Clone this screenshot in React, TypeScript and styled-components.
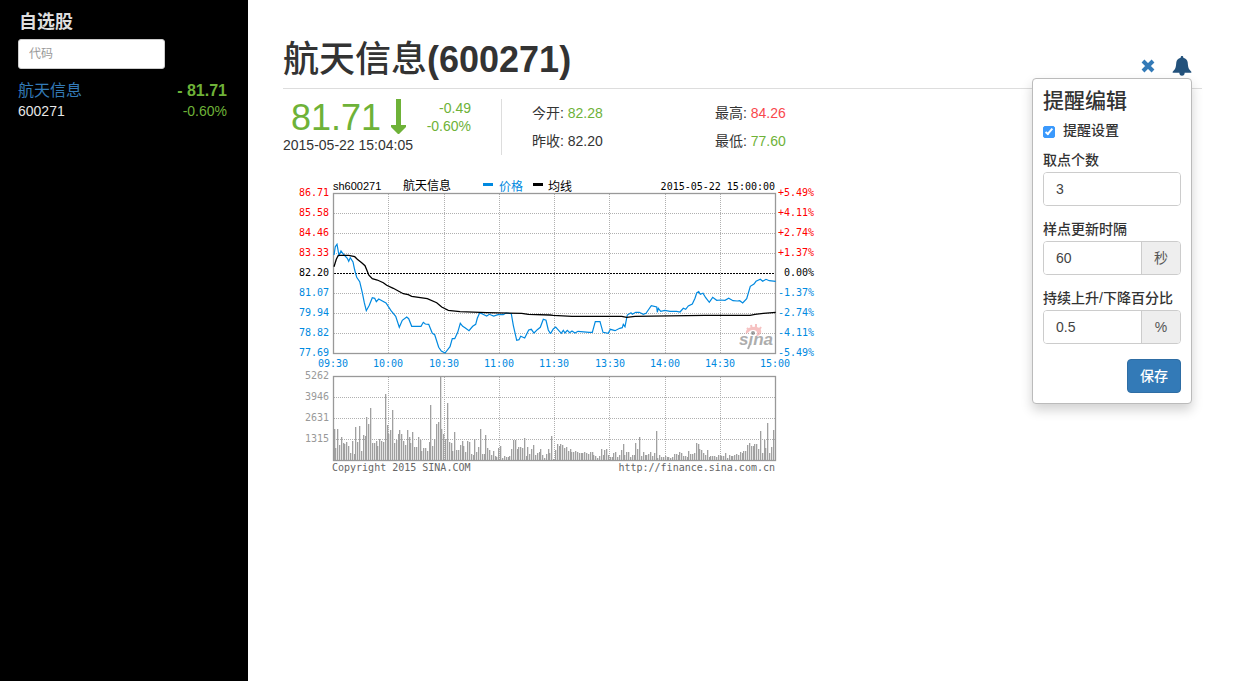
import React from 'react';
import styled, { createGlobalStyle } from 'styled-components';

const GREEN = '#6eb238';
const RED = '#f9484c';

const GlobalStyle = createGlobalStyle`
  *, *::before, *::after { box-sizing: border-box; }
  body {
    margin: 0;
    background: #fff;
    color: #333;
    font: 14px/20px "Liberation Sans", "Noto Sans CJK SC", sans-serif;
  }
  button, input { font: inherit; color: inherit; }
`;

const Page = styled.div`
  display: flex;
  min-height: 100vh;
`;

const Sidebar = styled.aside`
  flex: 0 0 248px;
  padding: 12px 20px 20px 18px;
  background: #000;
  color: #e6e6e6;
`;

const SidebarTitle = styled.h2`
  margin: 0 0 7px;
  padding-left: 1px;
  color: #ddd;
  font-size: 18px;
  line-height: 20px;
  font-weight: 700;
`;

const SearchInput = styled.input`
  display: block;
  width: 147px;
  height: 30px;
  padding: 5px 10px;
  border: 1px solid #ccc;
  border-radius: 3px;
  background: #fff;
  color: #555;
  font-size: 12px;
  line-height: 18px;
  &::placeholder { color: #999; opacity: 1; }
`;

const StockList = styled.ul`
  margin: 11px 0 0;
  padding: 0;
  list-style: none;
`;

const StockRow = styled.li`
  display: grid;
  grid-template-columns: 1fr auto;
  grid-template-rows: 22px 18px;
  padding-right: 1px;
  line-height: 18px;
`;

const StockLink = styled.a`
  color: #337ab7;
  font-size: 16px;
  line-height: 22px;
  text-decoration: none;
`;

const StockPrice = styled.strong`
  color: ${GREEN};
  font-size: 16px;
  line-height: 22px;
`;

const Figure = styled.span<{ $color?: string }>`
  color: ${(p) => p.$color || 'inherit'};
`;

const StockChange = styled(Figure)`
  text-align: right;
`;

const Main = styled.main`
  flex: 1;
  min-width: 0;
  padding: 40px 34px 40px 35px;
`;

const Header = styled.header`
  display: flex;
  justify-content: space-between;
  padding-bottom: 8px;
  border-bottom: 1px solid #ddd;
`;

const Title = styled.h1`
  margin: 0;
  font-size: 36px;
  line-height: 40px;
  font-weight: 500;
`;

const TitleCode = styled.span`
  font-weight: 700;
`;

const Actions = styled.div`
  position: relative;
  display: flex;
  align-items: center;
  gap: 14px;
  height: 20px;
  margin: 16px 10px 0 0;
`;

const IconButton = styled.button<{ $color: string }>`
  display: flex;
  justify-content: center;
  width: 20px;
  padding: 0;
  border: 0;
  background: none;
  color: ${(p) => p.$color};
  cursor: pointer;
`;

const Panel = styled.form`
  position: absolute;
  top: 22px;
  right: 0;
  z-index: 10;
  width: 160px;
  padding: 10px;
  border: 1px solid #bbb;
  border-radius: 4px;
  background: #fff;
  box-shadow: 0 6px 12px rgba(0, 0, 0, 0.18);
`;

const PanelTitle = styled.h3`
  margin: 0 0 7px;
  font-size: 21px;
  line-height: 24px;
  font-weight: 500;
`;

const CheckLabel = styled.label`
  display: flex;
  align-items: center;
  gap: 8px;
  margin-bottom: 12px;
  font-weight: 500;
  line-height: 20px;
`;

const Checkbox = styled.input`
  appearance: none;
  display: flex;
  justify-content: center;
  width: 12px;
  height: 12px;
  margin: 3px 0 0;
  border: 1px solid #3b99fc;
  border-radius: 2px;
  background: #fff;
  &:checked { background: #3b99fc; }
  &:checked::after {
    content: '';
    width: 4px;
    height: 8px;
    border: solid #fff;
    border-width: 0 2px 2px 0;
    transform: rotate(40deg);
  }
`;

const Field = styled.div`
  margin-bottom: 15px;
`;

const FieldLabel = styled.label`
  display: block;
  height: 20px;
  font-weight: 500;
  line-height: 16px;
  white-space: nowrap;
`;

const InputGroup = styled.div`
  display: flex;
  height: 34px;
  border: 1px solid #ccc;
  border-radius: 4px;
  overflow: hidden;
`;

const GroupInput = styled.input`
  flex: 1;
  min-width: 0;
  padding: 6px 12px;
  border: 0;
  background: #fff;
  color: #444;
`;

const Addon = styled.span`
  flex: 0 0 39px;
  border-left: 1px solid #ccc;
  background: #eee;
  color: #555;
  line-height: 32px;
  text-align: center;
`;

const PanelFooter = styled.div`
  display: flex;
  justify-content: flex-end;
`;

const SaveButton = styled.button`
  width: 54px;
  height: 34px;
  padding: 0;
  border: 1px solid #2e6da4;
  border-radius: 4px;
  background: #337ab7;
  color: #fff;
  font-weight: 500;
`;

const Quote = styled.section`
  display: flex;
  margin-top: 10px;
`;

const QuoteSummary = styled.div`
  flex: 0 0 219px;
  height: 56px;
  border-right: 1px solid #ddd;
`;

const PriceRow = styled.div`
  display: flex;
  align-items: flex-start;
  height: 36px;
  padding: 0 30px 0 8px;
  color: ${GREEN};
`;

const Price = styled.div`
  flex: 0 0 98px;
  font-size: 36px;
  line-height: 38px;
`;

const Change = styled.div`
  flex: 1;
  line-height: 18px;
  text-align: right;
`;

const QuoteDetails = styled.div`
  display: grid;
  grid-template-columns: 183px 183px;
  padding-left: 30px;
  line-height: 28px;
`;

const ChartImage = styled.svg`
  display: block;
  margin-top: 20px;
  font-family: "DejaVu Sans Mono", monospace;
  font-size: 10px;
`;

const VERTICALS = [388, 444, 499, 554, 609, 665, 720];
const TIMES: [number, string][] = [
  [333, '09:30'], [388, '10:00'], [444, '10:30'], [499, '11:00'], [554, '11:30'],
  [610, '13:30'], [665, '14:00'], [720, '14:30'], [775, '15:00'],
];
const LEVELS: [string, string, string][] = [
  ['86.71', '+5.49%', '#f00'], ['85.58', '+4.11%', '#f00'], ['84.46', '+2.74%', '#f00'],
  ['83.33', '+1.37%', '#f00'], ['82.20', '0.00%', '#000'], ['81.07', '-1.37%', '#0089e0'],
  ['79.94', '-2.74%', '#0089e0'], ['78.82', '-4.11%', '#0089e0'], ['77.69', '-5.49%', '#0089e0'],
];
const VOLUMES = ['5262', '3946', '2631', '1315'];

/* Samples are stored in thirds of a pixel, relative to the origin of their session. */
const samples = (text: string, originX: number, originY: number) =>
  text.trim().split(/\s+/).map((pair) => {
    const [x, y] = pair.split(',').map(Number);
    return [originX + x / 3, originY + y / 3];
  });

const PRICE = [
  ...samples('132,255 136,230 141,223 147,256 153,243 160,252 172,265 176,274 181,263 189,276 194,300', 290, 170),
  ...samples(`200,22 209,35 217,68 223,98 229,122 238,106 247,83 254,85 259,95 266,87 288,99 303,122 317,139 328,172
    337,151 350,141 356,146 365,169 393,169 400,157 406,162 416,163 427,190 434,194 446,232 454,243 465,249 480,230
    487,206 494,206 503,187 511,160 518,169 525,173 537,182 548,169 557,163 562,145 569,128 590,138 598,133 611,138
    624,134 640,134 648,129 664,131 670,166 680,211 687,209 692,199 704,204 716,180 724,178 732,189 742,179 751,172
    760,148 768,151 775,180 781,190`, 290, 270),
  ...samples(`2,190 10,177 17,171 34,190 40,181 45,189 52,181 59,188 66,183 75,189 84,184 118,187 127,187 136,155
    150,155 159,187 175,190 181,178 195,182 209,175 217,173 220,163 225,170 232,135 243,128 247,133 257,127 268,127
    280,133 288,130 304,107 320,111 322,127 325,115 332,124 345,121 360,124 380,124 390,126 400,115 407,118 415,108
    427,102 435,85 440,69 446,65 451,73 459,70 467,83 478,97 488,82 500,91 512,90 525,91 536,85 549,92 562,93 569,92
    578,99 590,86 601,49 612,42 618,34 631,28 638,34 648,28 658,32 677,34`, 550, 270),
];
const AVERAGE = [
  ...samples('132,290 139,268 145,256 176,256 194,260 202,268 216,279 225,287 233,307', 290, 170),
  ...samples(`236,15 247,26 262,30 280,38 290,46 310,55 325,63 340,71 355,74 365,79 412,86 440,98 455,111 475,121
    510,125 590,128 695,130 715,133 780,135`, 290, 270),
  ...samples('10,136 66,139 215,139 230,142 255,139 465,136 600,136 615,133 640,130 677,127', 550, 270),
];
const BARS = [
  ...samples(`134,192 137,249 142,192 148,240 154,216 160,234 163,237 169,231 175,243 181,264 187,228 193,267 196,186
    202,231 208,183 214,258 220,210 226,213 229,156 235,177 241,129 247,234 253,234 259,228 262,243 268,222 274,228
    280,231 286,87 292,180 295,207 301,195 307,135 313,234 319,225 325,207 328,195 334,207 340,228 346,240 352,195
    358,216 361,234 367,201 373,246 379,246 385,216 391,225 394,258 400,249 406,249 412,258 418,231 421,120 427,243
    433,222 439,177 445,171 451,34 454,192 460,207 466,222 472,114 478,231 484,234 487,258 493,201 499,255 505,255
    511,240 517,228 520,243 526,261 532,228 538,231 544,267 550,270 553,222 559,261 565,246 571,192 577,267 583,267
    586,210 592,249 598,255 604,270 610,258 616,273 619,276 625,249 631,243 637,279 643,273 649,276 655,276 658,273
    664,252 670,225 676,225 682,252 685,246 691,246 697,249 703,219 709,273 712,246 718,267 724,252 730,240 736,270
    742,264 748,261 751,252 757,270 763,279 769,267 775,252 778,264 784,213 790,282`, 290, 365),
  ...samples(`16,255 22,237 28,243 31,237 37,240 43,249 49,246 55,258 61,252 64,261 70,261 76,258 82,261 88,264 94,264
    97,264 103,261 109,264 115,267 121,261 127,261 130,270 136,273 142,279 148,273 154,252 160,270 163,255 169,252
    175,270 181,276 187,276 190,264 196,261 202,276 208,270 214,255 220,237 223,270 229,261 235,261 241,276 247,270
    253,270 256,234 262,252 268,216 274,273 280,261 286,270 289,270 295,267 301,261 307,273 313,264 319,198 322,279
    328,270 334,276 340,276 346,273 352,276 355,276 361,279 367,276 373,267 379,267 385,270 388,261 394,264 400,273
    406,273 412,276 415,258 421,267 427,267 433,264 439,234 445,237 448,252 454,255 460,264 466,270 472,255 478,276
    481,273 487,273 493,273 499,276 505,270 511,270 514,273 520,273 526,264 532,279 538,270 544,273 547,273 553,270
    559,267 565,270 571,261 577,264 580,258 586,258 592,240 598,234 604,243 610,243 613,237 619,237 625,252 631,198
    637,264 643,225 646,249 652,174 658,264 664,246 670,195`, 550, 365),
];

const toPoints = (list: number[][]) => list.map(([x, y]) => `${x.toFixed(1)},${y.toFixed(1)}`).join(' ');

function Chart() {
  return (
    <ChartImage width="545" height="300" viewBox="283 175 545 300" role="img" aria-label="航天信息 分时走势">
      <g stroke="#b0b0b0" strokeDasharray="1 1" shapeRendering="crispEdges">
        {VERTICALS.map((x) => (
          <React.Fragment key={x}>
            <line x1={x + 0.5} x2={x + 0.5} y1="194" y2="353" />
            <line x1={x + 0.5} x2={x + 0.5} y1="377" y2="460" />
          </React.Fragment>
        ))}
        {[213, 233, 253, 293, 313, 333, 397, 418, 439].map((y) => (
          <line key={y} x1="334" x2="775" y1={y + 0.5} y2={y + 0.5} />
        ))}
      </g>
      <line x1="334" x2="775" y1="273.5" y2="273.5" stroke="#000" strokeDasharray="2 1" shapeRendering="crispEdges" />
      <g fill="#a0a0a0">
        {BARS.map(([x, y], i) => (
          <rect key={i} x={Math.floor(x)} y={Math.round(y)} width="1.3" height={Math.max(0, 460 - Math.round(y))} />
        ))}
      </g>
      <g fill="none" stroke="#999" strokeWidth="1.3">
        <rect x="333.5" y="193.5" width="442" height="160" />
        <rect x="333.5" y="376.5" width="442" height="84" />
      </g>
      <g opacity="0.6">
        <text x="739" y="345" fill="#777" fontFamily="Liberation Sans" fontSize="17" fontStyle="italic" fontWeight="700">sina</text>
        <path d="M750 344l-2 5" stroke="#777" strokeWidth="2" />
        <path d="M746 334c-2-7 12-10 15-4 1 4-2 6-5 6 2-3 0-6-4-5-3 0-4 2-6 3z" fill="#f19a9a" />
        <path d="M747 328l2 2M751 325l1 4M756 324v4M761 327l-2 3" stroke="#f19a9a" strokeWidth="2" />
        <ellipse cx="753" cy="333" rx="4" ry="3" fill="#fff" />
        <circle cx="753" cy="333" r="2" fill="#666" />
      </g>
      <polyline points={toPoints(PRICE)} fill="none" stroke="#0089e0" strokeWidth="1.2" />
      <polyline points={toPoints(AVERAGE)} fill="none" stroke="#000" strokeWidth="1.3" />
      {LEVELS.map(([price, percent, color], i) => (
        <g key={price} fill={color}>
          <text x="329" y={196 + i * 20} textAnchor="end">{price}</text>
          <text x="814" y={196 + i * 20} textAnchor="end">{percent}</text>
        </g>
      ))}
      <g fill="#0089e0" textAnchor="middle">
        {TIMES.map(([x, label]) => <text key={label} x={x} y="367">{label}</text>)}
      </g>
      <g fill="#999" textAnchor="end">
        {VOLUMES.map((label, i) => <text key={label} x="329" y={379 + i * 21}>{label}</text>)}
      </g>
      <g fontFamily="'Liberation Sans', 'Noto Sans CJK SC', sans-serif" fontSize="12" fill="#000">
        <text x="333" y="190" fontSize="11">sh600271</text>
        <text x="403" y="190">航天信息</text>
        <text x="499" y="191" fill="#0089e0">价格</text>
        <text x="548" y="191">均线</text>
      </g>
      <rect x="483" y="183" width="10" height="3" fill="#0089e0" />
      <rect x="533" y="183" width="10" height="3" fill="#000" />
      <text x="775" y="190" textAnchor="end">2015-05-22 15:00:00</text>
      <text x="332" y="471" fill="#666">Copyright 2015 SINA.COM</text>
      <text x="775" y="471" fill="#666" textAnchor="end">http://finance.sina.com.cn</text>
    </ChartImage>
  );
}

function AlertPanel() {
  return (
    <Panel onSubmit={(e) => e.preventDefault()}>
      <PanelTitle>提醒编辑</PanelTitle>
      <CheckLabel>
        <Checkbox type="checkbox" defaultChecked />
        提醒设置
      </CheckLabel>
      <Field>
        <FieldLabel htmlFor="count">取点个数</FieldLabel>
        <InputGroup>
          <GroupInput id="count" defaultValue="3" />
        </InputGroup>
      </Field>
      <Field>
        <FieldLabel htmlFor="interval">样点更新时隔</FieldLabel>
        <InputGroup>
          <GroupInput id="interval" defaultValue="60" />
          <Addon>秒</Addon>
        </InputGroup>
      </Field>
      <Field>
        <FieldLabel htmlFor="percent">持续上升/下降百分比</FieldLabel>
        <InputGroup>
          <GroupInput id="percent" defaultValue="0.5" />
          <Addon>%</Addon>
        </InputGroup>
      </Field>
      <PanelFooter>
        <SaveButton type="submit">保存</SaveButton>
      </PanelFooter>
    </Panel>
  );
}

export default function App() {
  return (
    <>
      <GlobalStyle />
      <Page>
        <Sidebar>
          <SidebarTitle>自选股</SidebarTitle>
          <SearchInput placeholder="代码" aria-label="代码" />
          <StockList>
            <StockRow>
              <StockLink href="#600271">航天信息</StockLink>
              <StockPrice>- 81.71</StockPrice>
              <Figure>600271</Figure>
              <StockChange $color={GREEN}>-0.60%</StockChange>
            </StockRow>
          </StockList>
        </Sidebar>
        <Main>
          <Header>
            <Title>航天信息<TitleCode>(600271)</TitleCode></Title>
            <Actions>
              <IconButton type="button" aria-label="删除" $color="#337ab7">
                <svg width="14" height="14" viewBox="0 0 14 14">
                  <path d="M2 2l10 10M12 2L2 12" stroke="currentColor" strokeWidth="4" />
                </svg>
              </IconButton>
              <IconButton type="button" aria-label="提醒" $color="#23527c">
                <svg width="20" height="20" viewBox="0 0 60 60">
                  <path
                    d="M30 0c3 0 4 2 4 5 8 2 12 7 13 14 1 9 1 15 4 20l7 8v3H38c0 5-3 9-8 9s-8-4-8-9H2v-3l7-8c3-5 3-11 4-20 1-7 5-12 13-14 0-3 1-5 4-5z"
                    fill="currentColor"
                  />
                </svg>
              </IconButton>
              <AlertPanel />
            </Actions>
          </Header>
          <Quote>
            <QuoteSummary>
              <PriceRow>
                <Price>81.71</Price>
                <svg width="18" height="35" viewBox="0 0 18 35">
                  <path d="M7 0h5v26h5v2l-7 7H9l-7-7v-2h5z" fill="currentColor" />
                </svg>
                <Change>
                  <div>-0.49</div>
                  <div>-0.60%</div>
                </Change>
              </PriceRow>
              <time dateTime="2015-05-22T15:04:05">2015-05-22 15:04:05</time>
            </QuoteSummary>
            <QuoteDetails>
              <div>今开: <Figure $color={GREEN}>82.28</Figure></div>
              <div>最高: <Figure $color={RED}>84.26</Figure></div>
              <div>昨收: <Figure>82.20</Figure></div>
              <div>最低: <Figure $color={GREEN}>77.60</Figure></div>
            </QuoteDetails>
          </Quote>
          <Chart />
        </Main>
      </Page>
    </>
  );
}
